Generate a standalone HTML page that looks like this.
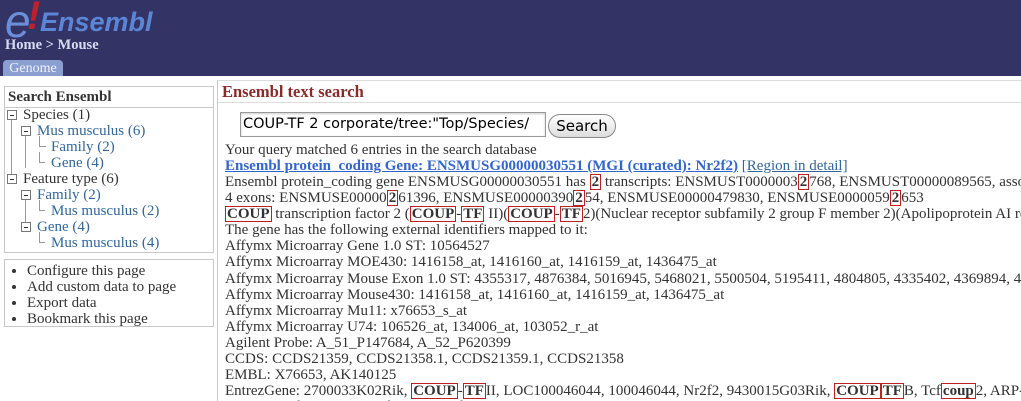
<!DOCTYPE html><html><head><style>
body{margin:0;width:1021px;height:401px;overflow:hidden;background:#fff;font-family:"Liberation Serif",serif;font-size:15px;color:#333;position:relative}
#hd{position:absolute;left:0;top:0;width:1021px;height:76px;background:#333366}
#logo{position:absolute;left:5px;top:-6px;font-family:"Liberation Sans",sans-serif;font-style:italic;font-size:46px;color:#6a8fd8}
#logo2{position:absolute;left:40px;top:7px;font-family:"Liberation Sans",sans-serif;font-style:italic;font-weight:bold;font-size:27px;color:#5b86d6}
#ex{position:absolute;left:27px;top:-6px;font-family:"Liberation Sans",sans-serif;font-style:italic;font-weight:bold;font-size:40px;color:#c0202c}
#bc{position:absolute;left:5px;top:37px;font-weight:bold;font-size:14.5px;color:#d8dcf0}
#tab{position:absolute;left:3px;top:60px;width:60px;height:16px;background:#8a9fd0;border-radius:4px 4px 0 0;color:#f0f2ff;font-size:14px;text-align:center;line-height:17px}
.box{position:absolute;border:1px solid #c8c8c8;box-sizing:border-box}
#b1{left:4px;top:86px;width:210px;height:167px}
#b1 .t{font-weight:bold;border-bottom:1px solid #c8c8c8;height:20px;line-height:20px;padding-left:3px;font-size:15px}
.tr{position:absolute;white-space:nowrap;line-height:16px}
.bl{color:#336699}
.m{position:absolute;width:8px;height:8px;border:1px solid #777;font-size:0;background:#fff}
.m:after{content:"";position:absolute;left:2px;top:3.5px;width:4px;height:1px;background:#333}
.vl{position:absolute;width:1px;background:#999}
.hl{position:absolute;height:1px;background:#999}
#b2{left:4px;top:259px;width:210px;height:68px}
#b2 ul{margin:3px 0 0;padding:0 0 0 22px;line-height:16px;font-size:15px}
#main{position:absolute;left:217px;top:80px;width:804px;height:321px;border-left:1px solid #c8c8c8;overflow:hidden}
#mh{height:21px;border-bottom:1px solid #ddd;border-top:1px solid #ddd;color:#8b2a2a;font-weight:bold;font-size:16.5px;padding-left:4px;line-height:21px}
#inp{position:absolute;left:22px;top:32px;width:306px;height:25px;border:1px solid #999;box-sizing:border-box;font-family:"DejaVu Sans",sans-serif;font-size:14.5px;line-height:23px;padding-left:2px;white-space:nowrap;overflow:hidden;color:#000;box-shadow:inset 0 1px 2px #ccc}
#btn{position:absolute;left:330px;top:34px;width:68px;height:24px;border:1px solid #888;border-radius:12px;box-sizing:border-box;font-family:"DejaVu Sans",sans-serif;font-size:15px;text-align:center;line-height:22px;background:linear-gradient(#fff,#ddd);color:#000}
#txt{position:absolute;left:7px;top:62px;white-space:nowrap}
#txt div{height:16.07px;line-height:16px}
#txt a{color:#3366cc;font-weight:bold;text-decoration:underline}
#txt a.n{font-weight:normal;color:#336699}
b.h{border:1px solid #b22;padding:0 1px;font-weight:bold;line-height:14px;display:inline-block}
</style></head><body>
<div id="hd">
<div id="logo">e</div><div id="ex">!</div><div id="logo2">Ensembl</div>
<div id="bc">Home &gt; Mouse</div>
<div id="tab">Genome</div>
</div>
<div class="box" id="b1"><div class="t">Search Ensembl</div></div>
<div class="vl" style="left:11px;top:120px;height:60px"></div>
<div class="vl" style="left:25px;top:136px;height:32px"></div>
<div class="vl" style="left:25px;top:200px;height:32px"></div>
<div class="hl" style="left:40px;top:146px;width:6px"></div><div class="vl" style="left:39px;top:136px;height:11px"></div>
<div class="hl" style="left:39px;top:162px;width:6px"></div><div class="vl" style="left:39px;top:152px;height:11px"></div>
<div class="hl" style="left:39px;top:210px;width:6px"></div><div class="vl" style="left:39px;top:200px;height:11px"></div>
<div class="hl" style="left:39px;top:242px;width:6px"></div><div class="vl" style="left:39px;top:232px;height:11px"></div>
<div class="m" style="left:7px;top:110px"></div>
<div class="m" style="left:21px;top:126px"></div>
<div class="m" style="left:7px;top:174px"></div>
<div class="m" style="left:21px;top:190px"></div>
<div class="m" style="left:21px;top:222px"></div>
<div class="tr" style="left:23px;top:107px">Species (1)</div>
<div class="tr bl" style="left:37px;top:123px">Mus musculus (6)</div>
<div class="tr bl" style="left:51px;top:139px">Family (2)</div>
<div class="tr bl" style="left:51px;top:155px">Gene (4)</div>
<div class="tr" style="left:23px;top:171px">Feature type (6)</div>
<div class="tr bl" style="left:37px;top:187px">Family (2)</div>
<div class="tr bl" style="left:51px;top:203px">Mus musculus (2)</div>
<div class="tr bl" style="left:37px;top:219px">Gene (4)</div>
<div class="tr bl" style="left:51px;top:235px">Mus musculus (4)</div>
<div class="box" id="b2"><ul><li>Configure this page</li><li>Add custom data to page</li><li>Export data</li><li>Bookmark this page</li></ul></div>
<div id="main">
<div id="mh">Ensembl text search</div>
<div id="inp">COUP-TF 2 corporate/tree:"Top/Species/</div>
<div id="btn">Search</div>
<div id="txt">
<div>Your query matched 6 entries in the search database</div>
<div><a>Ensembl protein_coding Gene: ENSMUSG00000030551 (MGI (curated): Nr2f2)</a> <a class="n">[Region in detail]</a></div>
<div>Ensembl protein_coding gene ENSMUSG00000030551 has <b class="h">2</b> transcripts: ENSMUST0000003<b class="h">2</b>768, ENSMUST00000089565, associated</div>
<div>4 exons: ENSMUSE00000<b class="h">2</b>61396, ENSMUSE00000390<b class="h">2</b>54, ENSMUSE00000479830, ENSMUSE0000059<b class="h">2</b>653</div>
<div><b class="h">COUP</b> transcription factor 2 (<b class="h">COUP</b>-<b class="h">TF</b> II)(<b class="h">COUP</b>-<b class="h">TF</b>2)(Nuclear receptor subfamily 2 group F member 2)(Apolipoprotein AI regulatory</div>
<div>The gene has the following external identifiers mapped to it:</div>
<div>Affymx Microarray Gene 1.0 ST: 10564527</div>
<div>Affymx Microarray MOE430: 1416158_at, 1416160_at, 1416159_at, 1436475_at</div>
<div>Affymx Microarray Mouse Exon 1.0 ST: 4355317, 4876384, 5016945, 5468021, 5500504, 5195411, 4804805, 4335402, 4369894, 4386</div>
<div>Affymx Microarray Mouse430: 1416158_at, 1416160_at, 1416159_at, 1436475_at</div>
<div>Affymx Microarray Mu11: x76653_s_at</div>
<div>Affymx Microarray U74: 106526_at, 134006_at, 103052_r_at</div>
<div>Agilent Probe: A_51_P147684, A_52_P620399</div>
<div>CCDS: CCDS21359, CCDS21358.1, CCDS21359.1, CCDS21358</div>
<div>EMBL: X76653, AK140125</div>
<div>EntrezGene: 2700033K02Rik, <b class="h">COUP</b>-<b class="h">TF</b>II, LOC100046044, 100046044, Nr2f2, 9430015G03Rik, <b class="h">COUP</b><b class="h">TF</b>B, Tcf<b class="h">coup</b>2, ARP-1</div>
<div>GT-Hr, Nr2f2-ps, Arp1, Tcfcoup2, Nr2f2, ARP1</div>
</div>
</div>
</body></html>
